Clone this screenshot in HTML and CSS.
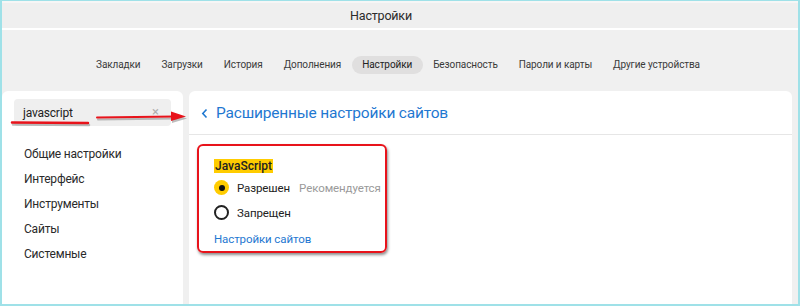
FILE: index.html
```html
<!DOCTYPE html>
<html lang="ru">
<head>
<meta charset="utf-8">
<title>Настройки</title>
<link rel="stylesheet" href="styles.css">
</head>
<body>
<div class="window">
  <div class="titlebar"><span class="title">Настройки</span></div>
  <nav class="tabs">
    <span class="tab">Закладки</span>
    <span class="tab">Загрузки</span>
    <span class="tab">История</span>
    <span class="tab">Дополнения</span>
    <span class="tab active">Настройки</span>
    <span class="tab">Безопасность</span>
    <span class="tab">Пароли и карты</span>
    <span class="tab">Другие устройства</span>
  </nav>
  <div class="panels">
    <aside class="side">
      <div class="search"><span class="query">javascript</span><span class="clear">×</span></div>
      <ul class="menu">
        <li>Общие настройки</li>
        <li>Интерфейс</li>
        <li>Инструменты</li>
        <li>Сайты</li>
        <li>Системные</li>
      </ul>
    </aside>
    <main class="main">
      <header class="main-head">
        <svg class="chev" width="7" height="11" viewBox="0 0 7 11"><path d="M5.5 1.5 L1.8 5.5 L5.5 9.5" fill="none" stroke="#1f78d1" stroke-width="1.6"/></svg>
        <h1 class="head-title">Расширенные настройки сайтов</h1>
      </header>
      <section class="js-box">
        <div class="js-title"><span class="mark">JavaScript</span></div>
        <div class="radio-row"><span class="radio on"></span><span class="lbl">Разрешен</span><span class="hint">Рекомендуется</span></div>
        <div class="radio-row"><span class="radio"></span><span class="lbl">Запрещен</span></div>
        <div class="link">Настройки сайтов</div>
      </section>
    </main>
  </div>
  <svg class="annot" width="800" height="306" viewBox="0 0 800 306">
    <g stroke="#888" stroke-opacity="0.55" fill="none" stroke-linecap="round">
      <path d="M13 124.5 L89 125" stroke-width="2.5"/>
      <path d="M98 119.5 L176 118.5" stroke-width="2"/>
    </g>
    <polygon points="172,113.5 187,118.5 172,123" fill="#888" fill-opacity="0.55"/>
    <g stroke="#e8131b" fill="none" stroke-linecap="round">
      <path d="M12 122.5 L88 123" stroke-width="2.5"/>
      <path d="M97 117.5 L175 116.5" stroke-width="2"/>
    </g>
    <polygon points="171,111.5 186,116.5 171,121" fill="#e8131b"/>
  </svg>
</div>
</body>
</html>
```
FILE: styles.css
```css
* { box-sizing: border-box; }
html, body { margin: 0; padding: 0; }
body {
  width: 800px;
  height: 306px;
  overflow: hidden;
  font-family: Roboto, "Noto Sans", sans-serif;
  color: #333;
  background: #fff;
}
.window {
  position: relative;
  width: 800px;
  height: 306px;
  border: 1px solid #9fe1e8;
  border-left-width: 2px;
  border-right-width: 2px;
  border-bottom-width: 2px;
  background: #f0f0f0;
  display: flex;
  flex-direction: column;
}
.titlebar {
  height: 29px;
  border-top: 2px solid #f6f6f6;
  border-bottom: 2px solid #fff;
  background: #efefef;
  display: flex;
  align-items: center;
  justify-content: center;
  padding-right: 38px;
}
.title {
  font-size: 12.5px;
  letter-spacing: -0.2px;
  color: #2b2b2b;
}
.tabs {
  display: flex;
  justify-content: center;
  padding: 26px 4px 0 0;
  height: 61px;
}
.tab {
  height: 18px;
  line-height: 18px;
  padding: 0 10.5px;
  font-size: 10px;
  letter-spacing: -0.1px;
  color: #3a3a3a;
  border-radius: 9px;
}
.tab.active {
  background: #e0dfdf;
  color: #222;
}
.panels {
  flex: 1;
  display: flex;
  gap: 6px;
  padding-right: 6px;
  min-height: 0;
}
.side {
  width: 181px;
  flex-shrink: 0;
  background: #fff;
  border-radius: 6px 6px 0 0;
  padding: 8px 12px 0 12px;
}
.search {
  height: 27px;
  width: 157px;
  background: #efefef;
  border-radius: 4px;
  display: flex;
  align-items: center;
  justify-content: space-between;
  padding: 0 12px 0 9px;
}
.query {
  font-size: 12px;
  letter-spacing: -0.2px;
  color: #222;
}
.clear {
  font-size: 13px;
  color: #b0b0b0;
  margin-top: -2px;
}
.menu {
  list-style: none;
  margin: 16px 0 0 0;
  padding: 0 0 0 10px;
}
.menu li {
  height: 25px;
  line-height: 25px;
  font-size: 12px;
  letter-spacing: -0.2px;
  color: #2a2a2a;
}
.main {
  flex: 1;
  background: #fff;
  border-radius: 6px 6px 0 0;
}
.main-head {
  height: 44px;
  border-bottom: 1px solid #e6e6e6;
  display: flex;
  align-items: center;
  padding: 0 0 0 12px;
  gap: 8px;
}
.chev { display: block; margin-top: 1px; }
.head-title {
  margin: 0;
  font-size: 15.5px;
  letter-spacing: -0.2px;
  font-weight: 400;
  color: #1f78d1;
}
.js-box {
  width: 190px;
  height: 109px;
  margin: 9px 0 0 8px;
  border: 2px solid #e8131b;
  border-radius: 6px;
  box-shadow: 1px 2px 3px rgba(0,0,0,0.45);
  padding: 10px 0 0 15px;
}
.js-title {
  height: 19px;
  display: flex;
  align-items: center;
}
.mark {
  display: inline-block;
  background: #ffcc00;
  font-size: 12px;
  font-weight: 500;
  line-height: 14px;
  color: #222;
  padding: 0 1px;
}
.radio-row {
  height: 25px;
  display: flex;
  align-items: center;
  white-space: nowrap;
}
.radio {
  flex-shrink: 0;
  width: 15px;
  height: 15px;
  border-radius: 50%;
  border: 2px solid #222;
  background: #fff;
  margin-right: 8px;
  display: flex;
  align-items: center;
  justify-content: center;
}
.radio.on {
  border: none;
  background: #ffcc00;
}
.radio.on::after {
  content: "";
  width: 6px;
  height: 6px;
  border-radius: 50%;
  background: #111;
}
.lbl {
  font-size: 11.5px;
  letter-spacing: -0.1px;
  color: #222;
}
.hint {
  font-size: 11.5px;
  letter-spacing: -0.1px;
  color: #9a9a9a;
  margin-left: 9px;
}
.link {
  margin-top: 5px;
  font-size: 11.5px;
  letter-spacing: -0.1px;
  line-height: 18px;
  color: #1f78d1;
}
.annot {
  position: absolute;
  left: -2px;
  top: -1px;
  pointer-events: none;
}
```
